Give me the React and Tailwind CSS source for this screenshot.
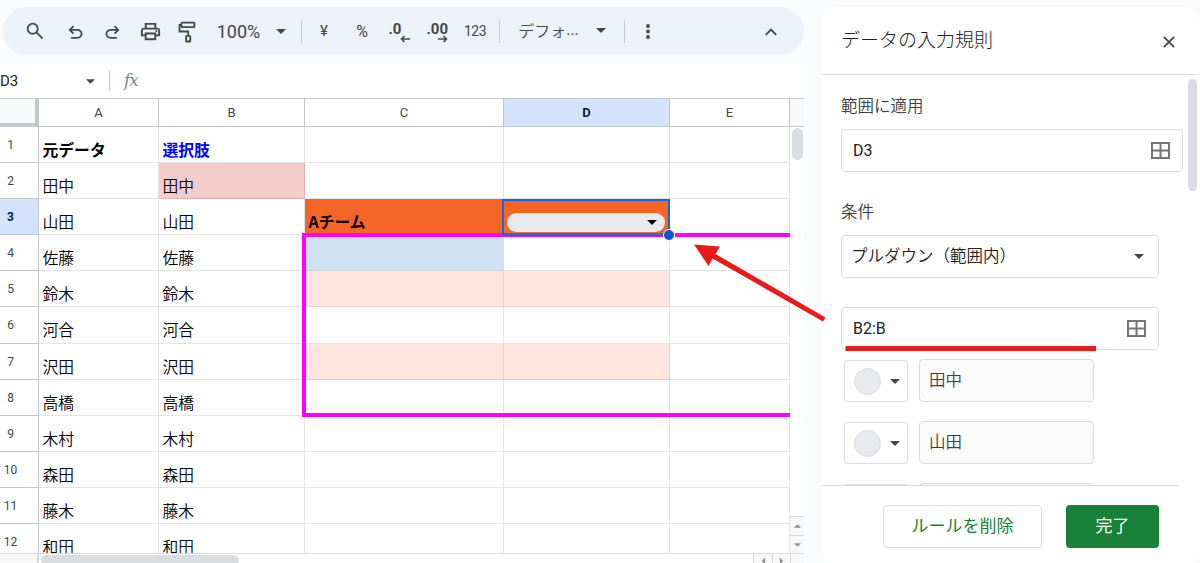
import React, { useState } from 'react'

const COLUMNS = [
  { key: 'A', width: 'w-[120px]' },
  { key: 'B', width: 'w-[146px]' },
  { key: 'C', width: 'w-[199px]' },
  { key: 'D', width: 'w-[166px]' },
  { key: 'E', width: 'w-[120px]' }
]

const ROWS = [
  { A: '元データ', B: '選択肢' },
  { A: '田中', B: '田中' },
  { A: '山田', B: '山田', C: 'Aチーム' },
  { A: '佐藤', B: '佐藤' },
  { A: '鈴木', B: '鈴木' },
  { A: '河合', B: '河合' },
  { A: '沢田', B: '沢田' },
  { A: '高橋', B: '高橋' },
  { A: '木村', B: '木村' },
  { A: '森田', B: '森田' },
  { A: '藤木', B: '藤木' },
  { A: '和田', B: '和田' }
]

const CELL_STYLES = {
  A1: 'border-[#e2e3e3] font-bold text-black',
  B1: 'border-[#e2e3e3] font-bold text-[#0000ff]',
  B2: 'border-[#dfb5b5] bg-[#f4cccc] font-[350] text-black',
  C3: 'border-[#f56526] bg-[#f56526] font-bold text-black',
  D3: 'border-[#f56526] bg-[#f56526] text-black',
  C4: 'border-[#cfe2f3] border-b-[#d9cfcb] bg-[#cfe2f3] text-black',
  C5: 'border-[#e6cfc9] bg-[#ffe5de] text-black',
  D5: 'border-[#e6cfc9] bg-[#ffe5de] text-black',
  C7: 'border-[#e6cfc9] bg-[#ffe5de] text-black',
  D7: 'border-[#e6cfc9] bg-[#ffe5de] text-black'
}

const Caret = ({ className = 'h-[5px] w-[10px] text-[#444746]' }) => (
  <svg viewBox="0 0 10 5" className={className} fill="currentColor">
    <path d="M0 0h10L5 5z" />
  </svg>
)

const Symbol = ({ d, className = 'h-[22px] w-[22px]' }) => (
  <svg viewBox="0 -960 960 960" className={className} fill="currentColor">
    <path d={d} />
  </svg>
)

const Divider = () => <span className="h-[23px] w-px bg-[#c7c7c7]" />

const GridIcon = () => (
  <svg viewBox="0 0 19 17" className="h-[17px] w-[19px]" fill="none" stroke="#757575" strokeWidth="2">
    <rect x="1" y="1" width="17" height="15" />
    <path d="M9.5 1v15M1 8.500h17" />
  </svg>
)

const DecimalIcon = ({ label, direction }) => (
  <span className="relative mt-[2px] block h-[21px] w-[21px] font-['Roboto'] text-[15px] font-bold leading-[14px]">
    <span className="block">{label}</span>
    <svg viewBox="0 0 10 8" className="absolute right-0 bottom-0 h-[8px] w-[10px]" fill="none" stroke="currentColor" strokeWidth="1.6">
      {direction === 'left' ? <path d="M10 4H1.500M4.500 1l-3 3 3 3" /> : <path d="M0 4h8.500M5.500 1l3 3-3 3" />}
    </svg>
  </span>
)

const Tool = ({ width, className = '', children }) => (
  <div className={`flex shrink-0 items-center justify-center whitespace-nowrap ${width} ${className}`}>{children}</div>
)

const Toolbar = () => (
  <div className="mt-[7px] ml-[3px] flex h-[48px] w-[801px] items-center rounded-full bg-[#ecf1fa] pl-3 text-[#444746]">
    <Tool width="w-[39px]">
      <Symbol d="M784-120 532-372q-30 24-69 38t-83 14q-109 0-184.5-75.5T120-580q0-109 75.5-184.5T380-840q109 0 184.5 75.5T640-580q0 44-14 83t-38 69l252 252-56 56ZM380-400q75 0 127.5-52.5T560-580q0-75-52.5-127.5T380-760q-75 0-127.5 52.5T200-580q0 75 52.5 127.5T380-400Z" />
    </Tool>
    <Tool width="w-[43px]">
      <Symbol className="mt-[3px] h-[21px] w-[21px]" d="M280-200v-80h284q63 0 109.5-40T720-420q0-60-46.5-100T564-560H312l104 104-56 56-200-200 200-200 56 56-104 104h252q97 0 166.5 63T800-420q0 94-69.5 157T564-200H280Z" />
    </Tool>
    <Tool width="w-[31px]">
      <Symbol className="mt-[3px] h-[21px] w-[21px] shrink-0" d="M396-200q-97 0-166.5-63T160-420q0-94 69.5-157T396-640h252L544-744l56-56 200 200-200 200-56-56 104-104H396q-63 0-109.5 40T240-420q0 60 46.5 100T396-280h284v80H396Z" />
    </Tool>
    <Tool width="w-[44px]">
      <Symbol className="h-[23px] w-[23px]" d="M640-640v-120H320v120h-80v-200h480v200h-80Zm-480 80h640-640Zm560 100q17 0 28.5-11.5T760-500q0-17-11.5-28.5T720-540q-17 0-28.5 11.5T680-500q0 17 11.5 28.5T720-460Zm-80 260v-160H320v160h320Zm80 80H240v-160H80v-240q0-51 35-85.5t85-34.5h560q51 0 85.5 34.5T880-520v240H720v160Zm80-240v-160q0-17-11.5-28.5T760-560H200q-17 0-28.5 11.5T160-520v160h80v-80h480v80h80Z" />
    </Tool>
    <Tool width="w-[30px]">
      <svg viewBox="0 0 18 22" className="mt-px h-[22px] w-[18px]" fill="none" stroke="currentColor" strokeWidth="1.8">
        <rect x="3.4" y="1.6" width="13" height="4.6" rx="0.6" />
        <path d="M3.4 3.9H1.500v6.600h8.700v4.400" />
        <rect x="8.1" y="14.9" width="4.2" height="5.6" rx="0.6" />
      </svg>
    </Tool>
    <Tool width="w-[73px]" className="pt-px font-['Roboto'] text-[18px]">100%</Tool>
    <Tool width="w-[12px]"><Caret /></Tool>
    <Tool width="w-[29px]"><Divider /></Tool>
    <Tool width="w-[16px]" className="font-['Roboto'] text-[15px]">¥</Tool>
    <Tool width="w-[60px]" className="pt-px font-['Roboto'] text-[16px]">%</Tool>
    <Tool width="w-[14px]"><div className="shrink-0"><DecimalIcon label=".0" direction="left" /></div></Tool>
    <Tool width="w-[62px]"><DecimalIcon label=".00" direction="right" /></Tool>
    <Tool width="w-[14px]" className="font-['Roboto'] text-[14px] tracking-[-0.5px]">123</Tool>
    <Tool width="w-[35px]"><Divider /></Tool>
    <Tool width="w-[63px]" className="pb-[2px] text-[16px] font-[350]">デフォ<span className="font-['Roboto'] font-normal">...</span></Tool>
    <Tool width="w-[42px]" className="pb-px"><Caret /></Tool>
    <Tool width="w-[5px]"><Divider /></Tool>
    <Tool width="w-[42px]">
      <svg viewBox="0 0 4 15" className="mt-px h-[15px] w-[4px]" fill="currentColor">
        <circle cx="2" cy="2" r="1.9" />
        <circle cx="2" cy="7.5" r="1.9" />
        <circle cx="2" cy="13" r="1.9" />
      </svg>
    </Tool>
    <Tool width="w-[66px]" className="ml-auto">
      <svg viewBox="0 0 12 8" className="mt-px h-[8px] w-[12px]" fill="none" stroke="currentColor" strokeWidth="1.9">
        <path d="M.8 6.800 6 1.600l5.200 5.200" />
      </svg>
    </Tool>
  </div>
)

const FormulaBar = ({ cell }) => (
  <div className="flex h-[34px] items-center bg-white">
    <span className="w-[86px] font-['Roboto'] text-[15px] text-[#202124]">{cell}</span>
    <Caret className="h-[5px] w-[9px] text-[#444746]" />
    <span className="ml-[14px] h-[20px] w-px bg-[#c7c7c7]" />
    <span className="ml-[14px] font-['DejaVu_Serif'] text-[17px] italic tracking-[-1px] text-[#80868b]">fx</span>
  </div>
)

const Sheet = ({ selected }) => (
  <div className="relative h-[454px] w-[790px] shrink-0 overflow-hidden">
    <div className="flex h-[28px] font-['Roboto'] text-[13px] text-[#444746]">
      <div className="w-[39px] border-r-4 border-b-4 border-[#c3c6c6] bg-[#f8f9fa]" />
      {COLUMNS.map(col => (
        <div
          key={col.key}
          className={`flex items-center justify-center border-r border-b border-[#c4c7c5] ${col.width} ${
            selected[0] === col.key ? 'bg-[#d3e3fd] font-bold text-[#041e49]' : ''
          }`}
        >
          {col.key}
        </div>
      ))}
    </div>

    {ROWS.map((row, i) => (
      <div key={i} className="flex h-[36.1px]">
        <div
          className={`w-[39px] border-r border-b border-[#c4c7c5] pt-[9px] pr-[17px] text-center font-['Roboto'] text-[12px] leading-[18px] ${
            selected.slice(1) === String(i + 1) ? 'bg-[#d3e3fd] font-bold text-[#041e49]' : 'text-[#444746]'
          }`}
        >
          {i + 1}
        </div>
        {COLUMNS.map(col => (
          <div
            key={col.key}
            className={`border-r border-b pt-[12px] pl-[3.5px] text-[15.8px] leading-[22px] whitespace-nowrap ${col.width} ${
              CELL_STYLES[`${col.key}${i + 1}`] || 'border-[#e2e3e3] font-[350] text-black'
            }`}
          >
            {row[col.key]}
          </div>
        ))}
      </div>
    ))}

    {/* Highlighted range */}
    <div className="absolute top-[134px] left-[302px] h-[184px] w-[500px] border-4 border-[#ff00ff]" />

    {/* Active cell with its dropdown chip */}
    <div className="absolute top-[100px] left-[502px] flex h-[37px] w-[168px] items-end border-2 border-[#1967d2] px-[3px] pb-[2px]">
      <div className="flex h-[19px] w-full items-center justify-end rounded-full bg-[#e8eaed] pr-[8px]">
        <Caret className="h-[5px] w-[10px] text-black" />
      </div>
    </div>
    <div className="absolute top-[130px] left-[663px] h-[12px] w-[12px] rounded-full border border-white bg-[#0b57d0]" />
  </div>
)

const Scroller = () => (
  <div className="flex w-[14px] flex-col">
    <div className="h-[28px] border-b border-[#c4c7c5] bg-[#f8f8f8]" />
    <div className="mt-px ml-[1.5px] h-[32px] w-[11px] rounded-full bg-[#dadce0]" />
    <div className="mt-auto flex h-[19px] items-center justify-center border-t border-[#d9d9d9] bg-[#f8f8f8]">
      <Caret className="h-[4px] w-[7px] rotate-180 text-[#8f8f8f]" />
    </div>
    <div className="flex h-[18px] items-center justify-center border-t border-[#d9d9d9] bg-[#f8f8f8]">
      <Caret className="h-[4px] w-[7px] text-[#8f8f8f]" />
    </div>
  </div>
)

const BottomScroller = () => (
  <div className="flex h-[11px] overflow-hidden border-t border-[#d9d9d9]">
    <div className="w-[39px] border-r-2 border-[#d9d9d9] bg-[#f8f8f8]" />
    <div className="mt-px ml-[2px] h-[11px] w-[198px] shrink-0 rounded-full bg-[#dadce0]" />
    <div className="ml-auto flex w-[19px] items-center justify-center border-l border-[#d9d9d9] bg-[#f8f8f8] pt-[3px]">
      <Caret className="h-[4px] w-[7px] rotate-90 text-[#8f8f8f]" />
    </div>
    <div className="flex w-[18px] items-center justify-center border-l border-[#d9d9d9] bg-[#f8f8f8] pt-[3px]">
      <Caret className="h-[4px] w-[7px] -rotate-90 text-[#8f8f8f]" />
    </div>
    <div className="w-[14px] border-l border-[#d9d9d9] bg-[#f8f8f8]" />
  </div>
)

const OptionRow = ({ label }) => (
  <div className="mb-[19px] ml-[3px] flex h-[43px] shrink-0 items-start gap-[11px]">
    <div className="mt-px flex h-[42px] w-[64px] items-center gap-[9px] rounded border border-[#dadce0] pl-[9px]">
      <span className="h-[27px] w-[27px] rounded-full border border-[#dadce0] bg-[#e8eaed]" />
      <Caret />
    </div>
    <div className="h-[43px] w-[175px] rounded border border-[#dadce0] bg-[#fafafa] pt-[7px] pl-[9px] text-[16.5px] leading-[24px] font-[350] text-[#3c4043]">
      {label}
    </div>
  </div>
)

const RulesPanel = ({ range, setRange, source, setSource }) => (
  <aside className="mt-[7px] ml-[18px] flex h-[560px] w-[378px] shrink-0 flex-col rounded-2xl bg-white text-[#3c4043]">
    <div className="flex h-[68px] shrink-0 items-center justify-between border-b border-[#dadce0] pr-[25px] pl-[19px]">
      <h2 className="pb-[3px] text-[19px] font-light text-[#202124]">データの入力規則</h2>
      <svg viewBox="0 0 12 12" className="mt-[2px] h-[12px] w-[12px]" stroke="#444746" strokeWidth="1.8">
        <path d="M.8.8l10.400 10.400M11.200.8.8 11.200" />
      </svg>
    </div>

    <div className="flex h-[410px] shrink-0 justify-between pr-[3px] pl-[19px]">
      <div className="flex h-[410px] w-[342px] flex-col overflow-hidden">
        <p className="mt-[18px] text-[16.5px] leading-[24px] font-[350]">範囲に適用</p>
        <div className="mt-[12px] flex h-[43px] shrink-0 items-center justify-between rounded border border-[#dadce0] pr-[12px] pl-[11px]">
          <input
            value={range}
            onChange={e => setRange(e.target.value)}
            className="w-[200px] font-['Roboto'] text-[16px] text-[#202124] outline-none"
          />
          <GridIcon />
        </div>
        <p className="mt-[27px] text-[16.5px] leading-[24px] font-[350]">条件</p>
        <div className="mt-[12px] flex h-[43px] w-[318px] shrink-0 items-center justify-between rounded border border-[#dadce0] pr-[14px] pl-[9px]">
          <span className="pb-[3px] text-[16.5px] font-[350] text-[#202124]">プルダウン（範囲内）</span>
          <Caret />
        </div>
        <div className="mt-[29px] flex h-[43px] w-[318px] shrink-0 items-center justify-between rounded border border-[#dadce0] pr-[12px] pl-[11px]">
          <input
            value={source}
            onChange={e => setSource(e.target.value)}
            className="w-[200px] font-['Roboto'] text-[16px] text-[#202124] outline-none"
          />
          <GridIcon />
        </div>
        <div className="mt-[9px]">
          {['田中', '山田', ''].map((name, i) => (
            <OptionRow key={i} label={name} />
          ))}
        </div>
      </div>
      <div className="mt-[4px] h-[112px] w-[9px] rounded-full bg-[#dadce0]" />
    </div>

    <div className="flex w-[356px] gap-[24px] border-t border-[#dadce0] pt-[19px] pl-[61px]">
      <button className="h-[43px] w-[159px] rounded border border-[#dadce0] pb-[3px] text-[17px] text-[#188038]">ルールを削除</button>
      <button className="h-[43px] w-[93px] rounded bg-[#188038] pb-[3px] text-[17px] text-white">完了</button>
    </div>
  </aside>
)

const App = () => {
  const [range, setRange] = useState('D3')
  const [source, setSource] = useState('B2:B')

  return (
    <div className="relative flex h-[563px] w-[1200px] overflow-hidden bg-[#f9fbfd] font-['Noto_Sans_CJK_JP',sans-serif]">
      <main className="w-[804px] shrink-0">
        <Toolbar />
        <div className="mt-[9px] bg-white">
          <FormulaBar cell="D3" />
          <div className="flex border-t border-[#c4c7c5]">
            <Sheet selected="D3" />
            <Scroller />
          </div>
          <BottomScroller />
        </div>
      </main>

      <RulesPanel range={range} setRange={setRange} source={source} setSource={setSource} />

      {/* Arrow and underline pointing out the source range */}
      <svg viewBox="0 0 1200 563" className="pointer-events-none absolute inset-0 h-full w-full" fill="#e81a1a">
        <path d="M694 244.500 720 246.500 715.500 254 825.500 317.500 823 321.500 712.500 258.500 708.500 266z" />
        <path d="M845.500 346h250.500v5h-250.500z" />
      </svg>
    </div>
  )
}

export default App
